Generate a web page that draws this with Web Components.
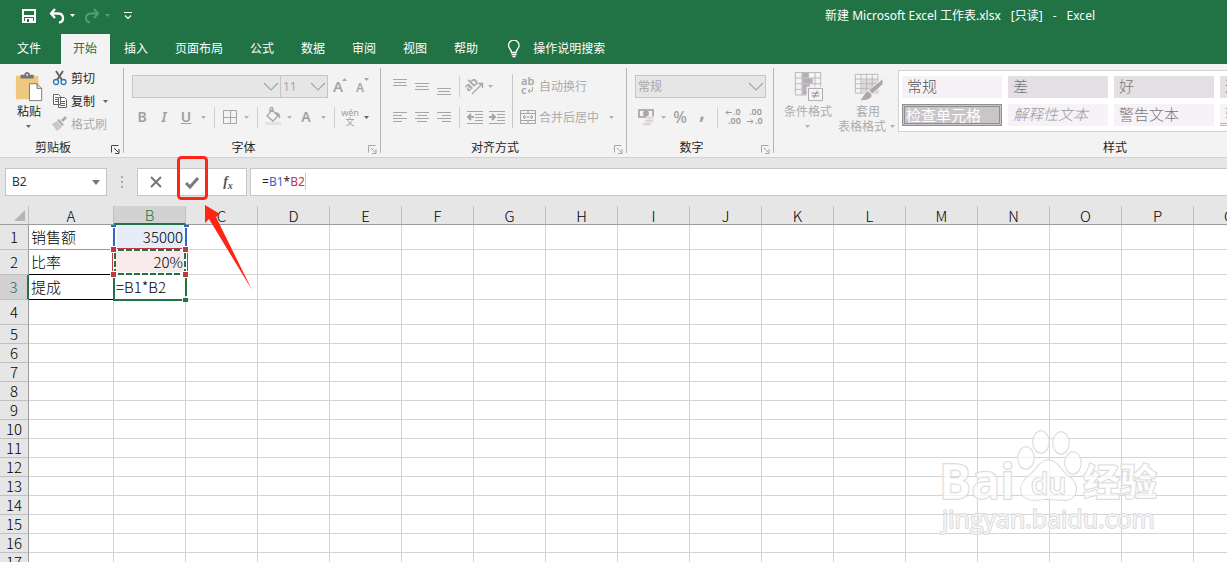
<!DOCTYPE html>
<html lang="zh-CN">
<head>
<meta charset="utf-8">
<title>新建 Microsoft Excel 工作表.xlsx - Excel</title>
<style>
html,body{margin:0;height:100%}
body{overflow:hidden;font:12px/16px "Noto Sans","Noto Sans CJK SC",sans-serif;color:#262626;background:#fff}
</style>
</head>
<body>
<xl-app></xl-app>
<script>
const ICONS={
save:[16,16,`<path fill="none" stroke="#fff" stroke-width="2" d="M2 2h12v12H2z"/><path fill="#fff" d="M2 7h12v2H2zM4 10h8v4H4z"/><path fill="#217346" d="M6 11h2v3H6z"/>`],
undo:[18,16,`<path fill="none" stroke="#fff" stroke-width="2.300" d="M7 1L3 5.500l4 4.500M3 5.500h7c6 0 7 8 1 9"/>`],
redo:[18,16,`<path fill="none" stroke="#5a9a77" stroke-width="2" d="M11 1l4 4.500-4 4.500M15 5.500H8c-6 0-7 8-1 9"/>`],
more:[10,10,`<path fill="none" stroke="#fff" stroke-width="1.200" d="M1 1.500h8M2 4.500L5 7.500 8 4.500"/>`],
bulb:[14,18,`<path fill="none" stroke="#fff" stroke-width="1.300" d="M4.500 12.500c0-3-3-4-3-7a5.300 5.300 0 0 1 10.600 0c0 3-3 4-3 7zM4.500 14.500h5M5.500 16.500h3"/>`],
paste:[30,32,`<path fill="#edc87e" d="M1 4h24v25H1z"/><path fill="#777" d="M6 3h4c0-4 6-4 6 0h4v4H6z"/><circle cx="13" cy="3" r="1" fill="#fff"/><path fill="#fff" stroke="#777" d="M15.500 12.500h8l5 5v13h-13zM23.500 12.500v5h5"/>`],
cut:[16,16,`<path fill="none" stroke="#666" stroke-width="2" d="M4 1l6 9M11 1L5 10"/><circle cx="4" cy="12" r="2.500" fill="none" stroke="#2f75b5" stroke-width="1.300"/><circle cx="11.500" cy="12" r="2.500" fill="none" stroke="#2f75b5" stroke-width="1.300"/>`],
copy:[16,16,`<path fill="#fff" stroke="#666" d="M1.500 1.500h5l2 2v8h-7zM6.500 4.500h6l2 2v8h-8z"/><path stroke="#2f75b5" d="M3 4.500h3M3 6.500h3M3 8.500h3M8 8.500h5M8 10.500h5M8 12.500h5"/>`],
brush:[16,16,`<path fill="#c9c5c9" d="M0 8l5-3 5 6-5 4z"/><path fill="#ababab" d="M5 4l2-1 5 6-2 1zM9 4l4-4 2 2-4 4z"/>`],
grow:[22,22,`<text x="4" y="16" font-size="15" font-weight="600" fill="#a6a6a6">A</text><path fill="#a6a6a6" d="M13 5h5l-2.500-3z"/>`],
shrink:[22,22,`<text x="5" y="16" font-size="12" font-weight="600" fill="#a6a6a6">A</text><path fill="#a6a6a6" d="M13 2h5l-2.500 3z"/>`],
border:[20,22,`<path fill="none" stroke="#a6a6a6" d="M3.500 4.500h13v13h-13zM10.500 5v12M4 11.500h12"/>`],
fill:[20,22,`<path fill="#f5f2f5" stroke="#a6a6a6" stroke-width="1.300" d="M4 10l5-6 6 6-5 5zM7 7V3c0-2 3-2 3 0v3"/><path fill="#a6a6a6" d="M12 6c4 0 6 3 5 7-1-2-2-3-3-3z"/><path fill="#e4e0e4" d="M2 16h16v3H2z"/>`],
top:[22,22,L([[3,14],[6,12,5],[9,14]])],mid:[22,22,L([[7,14],[10,12,5],[13,14]])],bot:[22,22,L([[12,14],[15,12,5],[18,14]])],
left:[22,22,L([[6,14],[9,9],[12,14],[15,9]])],center:[22,22,L([[6,14],[9,10,6],[12,14],[15,10,6]])],right:[22,22,L([[6,14],[9,9,9],[12,14],[15,9,9]])],
angle:[20,22,`<g transform="rotate(-45 8 10)"><text x="1" y="12" font-size="12" font-weight="600" fill="#a6a6a6">ab</text></g><path fill="none" stroke="#a6a6a6" stroke-width="1.300" d="M8 18L18 8M14 7.500h4.500V12"/>`],
outdent:[22,22,`<path stroke="#a6a6a6" d="M3 5.500h16M11 8.500h8M11 11.500h8M11 14.500h8M3 17.500h16"/><path fill="none" stroke="#a6a6a6" stroke-width="2" d="M10 11H4M7 8l-3 3 3 3"/>`],
indent:[22,22,`<path stroke="#a6a6a6" d="M3 5.500h16M11 8.500h8M11 11.500h8M11 14.500h8M3 17.500h16"/><path fill="none" stroke="#a6a6a6" stroke-width="2" d="M3 11h6M6 8l3 3-3 3"/>`],
wrap:[16,18,`<text x="1" y="8" font-size="11" font-weight="600" fill="#a6a6a6">ab</text><text x="1" y="17" font-size="11" font-weight="600" fill="#a6a6a6">c</text><path fill="none" stroke="#a6a6a6" d="M12.500 10v4H8M10 12l-2 2 2 2"/>`],
merge:[16,16,`<path fill="none" stroke="#a6a6a6" d="M.5 1.500h15v13H.5zM0 4.500h16M0 11.500h16M8 2v3M8 12v3M3 8h10M5 6L3 8l2 2M11 6l2 2-2 2"/>`],
money:[22,22,`<path fill="#b3aeb3" d="M3 3h16v9H3z"/><path fill="#f6f2f6" d="M5 5h12v5H5z"/><circle cx="11" cy="7.500" r="3" fill="#aaa6aa"/><g fill="#d9d5d9" stroke="#f3f3f3"><ellipse cx="15" cy="12" rx="4" ry="2"/><ellipse cx="14" cy="15" rx="5" ry="2"/><ellipse cx="12" cy="18" rx="5" ry="2"/></g>`],
inc:[22,22,`<g font-size="9" font-weight="600" fill="#999"><text x="11" y="9">.0</text><text x="6" y="18">.00</text></g><path fill="none" stroke="#999" d="M10 6.500H4M6 4.500l-2 2 2 2"/>`],
dec:[22,22,`<g font-size="9" font-weight="600" fill="#999"><text x="5" y="9">.00</text><text x="11" y="18">.0</text></g><path fill="none" stroke="#999" d="M3 15.500h6M7 13.500l2 2-2 2"/>`],
cond:[32,32,`<path fill="#f6f2f6" stroke="#b9b5b9" d="M2.500 .5h27v24h-27z"/><path fill="none" stroke="#b9b5b9" d="M2 6.500h28M2 12.500h28M2 18.500h28M9.500 1v24M16.500 1v24M23.500 1v24"/><path fill="#b3afb3" d="M10 1h6v5h-6zM10 7h11v5H10zM10 13h8v5h-8zM10 19h6v5h-6z"/><path fill="#f6f2f6" stroke="#f3f3f3" stroke-width="4" d="M16.500 17.500h15v13h-15z"/><path fill="#f6f2f6" stroke="#aaa6aa" d="M16.500 17.500h15v13h-15z"/><path stroke="#888" d="M20 22.500h8M20 25.500h8M26 20l-4 8"/>`],
tbl:[32,32,`<path fill="#f6f2f6" stroke="#b9b5b9" d="M2.500 2.500h24v20h-24z"/><path fill="#dcd8dc" d="M9 8h18v15H9z"/><path fill="none" stroke="#b9b5b9" d="M2 7.500h25M2 12.500h25M2 17.500h25M8.500 3v20M14.500 3v20M20.500 3v20"/><path fill="#aaa6aa" stroke="#f3f3f3" d="M32 7v6L20 24l-4-4zM16 20c3 0 5 3 4 6-2 4-7 5-13 4 4-2 4-8 9-10z"/>`],
launch:[9,9,`<path fill="none" stroke="currentColor" d="M.5 7.500V.5h7M3 3l4.500 4.500M8 4v4.500H4"/>`],
cross:[14,14,`<path fill="none" stroke="#777" stroke-width="2" d="M2 2l10 10M12 2L2 12"/>`],
check:[16,16,`<path fill="none" stroke="#7a7a7a" stroke-width="3" d="M2 9l4 4L14 4"/>`],
chev:[16,10,`<path fill="none" stroke="#a6a6a6" stroke-width="1.200" d="M1 1l7 7 7-7"/>`]
};
function L(rows){return '<path stroke="#a6a6a6" d="'+rows.map(([y,w,x=4])=>`M${x} ${y}.5h${w}`).join('')+'"/>'}
const svg=n=>{const[w,h,b]=ICONS[n];return`<svg width="${w}" height="${h}" viewBox="0 0 ${w} ${h}" aria-hidden="true">${b}</svg>`};
const BASE=`*{box-sizing:border-box}svg{display:block;flex:none}button{font:inherit;color:inherit;background:none;border:0;padding:0;margin:0}`;
function define(name,css,html){
  customElements.define(name,class extends HTMLElement{
    connectedCallback(){
      if(this.shadowRoot)return;
      const r=this.attachShadow({mode:'open'}),t=document.createElement('template');
      t.innerHTML=`<style>${BASE}${css}</style>${typeof html==='function'?html(this):html}`;
      r.append(t.content.cloneNode(true));
    }
  });
}
define('xl-caret',`:host{display:flex;width:12px;justify-content:center;color:#b4b4b4;flex:none}:host([on]){color:#666}:host([big]) svg{width:8px;height:5px}`,
  `<svg width="5" height="3" viewBox="0 0 5 3"><path fill="currentColor" d="M0 0h5L2.500 3z"/></svg>`);
define('xl-sep',`:host{flex:none;width:11px;display:flex;justify-content:center}:host([tight]){width:9px}i{width:1px;height:21px;background:#d0d0d0}`,'<i></i>');
define('xl-tool',`:host{display:flex;align-items:center;flex:none;height:22px;color:#a0a0a0}
  button{width:22px;height:22px;display:flex;align-items:center;justify-content:center;font-size:14px}:host([narrow]) button{width:20px}`,
  e=>`<button aria-label="${e.getAttribute('label')}">${e.getAttribute('icon')?svg(e.getAttribute('icon')):'<slot></slot>'}</button>${e.hasAttribute('caret')?`<xl-caret ${e.getAttribute('caret')}></xl-caret>`:''}`);
define('xl-wide',`:host{display:flex;height:20px;color:#ababab}:host([on]){color:#262626}
  button{display:flex;align-items:center;gap:3px;line-height:18px}span{padding-top:2px}`,
  e=>`<button>${svg(e.getAttribute('icon'))}<span><slot></slot></span></button>`);
define('xl-big',`:host{display:block;flex:none;color:#ababab}:host([on]){color:#262626}
  button{display:flex;flex-direction:column;align-items:center;gap:2px;width:100%;line-height:15px;padding-top:4px}
  span{display:flex;flex-direction:column;align-items:center}svg{height:30px}
  ::slotted(xl-caret){height:15px;align-items:center}`,
  e=>`<button>${svg(e.getAttribute('icon'))}<span><slot></slot></span></button>`);
define('xl-combo',`:host{display:flex;height:23px;position:relative;flex:none}
  select{appearance:none;width:100%;height:23px;border:1px solid #c6c6c6;background:#e6e6e6;border-radius:0;font:inherit;color:#a6a6a6;padding:0 2px;opacity:1}
  svg{position:absolute;right:2px;top:7px;pointer-events:none}`,
  e=>`<select disabled aria-label="${e.getAttribute('label')}"><option>${e.getAttribute('value')}</option></select>${svg('chev')}`);
define('xl-group',`:host{display:flex;flex-direction:column;flex:none;height:85px;border-right:1px solid #b5b5b5}
  .b{height:73px}footer{display:flex;height:12px}footer span{flex:1;text-align:center;line-height:14px}
  footer button{width:17px;height:12px;display:flex;align-items:center;justify-content:center;padding:4px 0 0 2px;color:#a6a6a6}
  :host([on]) footer button{color:#444}`,
  e=>`<div class="b"><slot></slot></div><footer><span>${e.getAttribute('label')}</span><button aria-label="${e.getAttribute('label')}设置">${svg('launch')}</button></footer>`);

define('xl-titlebar',`:host{display:flex;align-items:center;height:34px;background:#217346;color:#fff;padding:0 132px 3px 21px}
  nav{display:flex;align-items:center}nav button{display:flex;align-items:center}
  xl-caret{color:#fff}xl-caret[dim]{color:#5a9a77}h1{font:inherit;margin:0 0 0 auto;display:flex;gap:10px}
  .u{margin-left:11px}.r{margin-left:5px}.m{margin-left:10px}`,
  `<nav><button aria-label="保存">${svg('save')}</button><button class="u" aria-label="撤消">${svg('undo')}<xl-caret></xl-caret></button><button class="r" aria-label="恢复">${svg('redo')}<xl-caret dim></xl-caret></button><button class="m" aria-label="更多">${svg('more')}</button></nav>
  <h1><span>新建 Microsoft Excel 工作表.xlsx</span><span>[只读]</span><span>-</span><span>Excel</span></h1>`);
define('xl-tabs',`:host{display:flex;height:30px;background:#217346;color:#fff;gap:2px}
  button{padding:0 13px 0 12px;height:30px;line-height:18px}.f{padding:0 18px 0 17px;width:59px}.on{background:#f3f3f3;color:#217346}
  .s{display:flex;align-items:center;gap:12px;padding:0 14px}`,
  `<button class="f">文件</button>`+['开始','插入','页面布局','公式','数据','审阅','视图','帮助'].map((t,i)=>`<button class="${i?'':'on'}">${t}</button>`).join('')+
  `<button class="s">${svg('bulb')}操作说明搜索</button>`);
define('xl-gallery',`:host{display:grid;grid-template-columns:repeat(6,100px);gap:6px;border:1px solid #d2d2d2;background:#fff;padding:5px 3px;margin-top:2px;height:62px;flex:none;font:300 15px/18px "Noto Sans CJK SC",sans-serif}
  button{height:22px;text-align:left;padding:0 5px 2px;background:#f6f2f8;color:#555;white-space:nowrap}
  .g{background:#e3dfe3;color:#777}.k{background:#c9c5c9;border:3px double #8f8f8f;color:#fff;padding:0 1px;line-height:14px;font-weight:400}
  .i{font-style:italic;color:#999}.w{color:#777}.c{border-bottom:3px double #b5b5b5;color:#999}`,
  [['常规',''],['差','g'],['好','g'],['适中','g'],['计算','w'],['链接单元格','w'],['检查单元格','k'],['解释性文本','i'],['警告文本','w'],['输出','c'],['输入','w'],['注释','w']].map(([t,c])=>`<button class="${c}">${t}</button>`).join(''));
const T=(i,l,x='')=>`<xl-tool icon="${i}" label="${l}" ${x}></xl-tool>`;
define('xl-ribbon',`:host{display:flex;height:94px;padding:4px 0;background:#f3f3f3;border-bottom:1px solid #d2d2d2;overflow:hidden}
  .row{display:flex;align-items:center;height:22px}.row+.row{margin-top:8px}.row.h{height:23px}
  .clip{display:flex;padding-left:12px;gap:6px}.clip xl-big{width:34px}.col{display:grid;gap:3px;align-content:start}
  .col div{display:flex;align-items:center;gap:4px}
  .pad7{padding:7px 0 0 7px}.pad8{padding:7px 0 0 8px}.al{display:flex}.al .sep{width:1px;height:54px;background:#c8c8c8;margin:6px 7px 0 4px}
  .al .w{padding-top:8px;display:grid;gap:11px;align-content:start}.al .w div{display:flex;align-items:center}.al xl-caret{margin-left:6px}
  .al .row xl-caret{margin:0}b{font-weight:600}.fs{width:149px;margin-left:1px}.sz{width:48px;margin-left:-1px;margin-right:1px}.nf{width:131px}
  .g1{width:124px}.g2{width:257px}.g3{width:246px}.g4{width:147px}.g5{width:700px}
  .st{display:flex;padding-left:4px}.st .a,.st .b{width:60px}.t{display:flex;align-items:center}
  .wen{display:flex;flex-direction:column;font-size:9px;line-height:9px;align-items:center}
  .pct{font-size:16px;font-weight:500}.com{font-size:22px;line-height:10px;padding-bottom:14px}`,
  `<xl-group label="剪贴板" class="g1" on><div class="clip"><xl-big icon="paste" on>粘贴<xl-caret on></xl-caret></xl-big>
   <div class="col"><xl-wide icon="cut" on>剪切</xl-wide><div><xl-wide icon="copy" on>复制</xl-wide><xl-caret on></xl-caret></div><xl-wide icon="brush">格式刷</xl-wide></div></div></xl-group>
  <xl-group label="字体" class="g2"><div class="pad7"><div class="row h"><xl-combo class="fs" label="字体" value=""></xl-combo><xl-combo class="sz" label="字号" value="11"></xl-combo>${T('grow','增大字号')}${T('shrink','减小字号')}</div>
   <div class="row"><xl-tool label="加粗"><b>B</b></xl-tool><xl-tool label="倾斜"><b><i>I</i></b></xl-tool><xl-tool label="下划线" caret><b><u>U</u></b></xl-tool><xl-sep></xl-sep>${T('border','边框','narrow caret')}<xl-sep></xl-sep>${T('fill','填充','narrow caret')}<xl-tool label="字体颜色" caret><b>A</b></xl-tool><xl-sep></xl-sep><xl-tool label="拼音" narrow caret="on"><span class="wen"><span>wén</span><span>文</span></span></xl-tool></div></div></xl-group>
  <xl-group label="对齐方式" class="g3"><div class="al"><div class="pad8"><div class="row h">${T('top','顶端对齐')}${T('mid','垂直居中')}${T('bot','底端对齐')}<xl-sep tight></xl-sep>${T('angle','方向','narrow caret')}</div>
   <div class="row">${T('left','左对齐')}${T('center','居中')}${T('right','右对齐')}<xl-sep tight></xl-sep>${T('outdent','减少缩进')}${T('indent','增加缩进')}</div></div><div class="sep"></div>
   <div class="w"><div><xl-wide icon="wrap">自动换行</xl-wide></div><div><xl-wide icon="merge">合并后居中</xl-wide><xl-caret></xl-caret></div></div></div></xl-group>
  <xl-group label="数字" class="g4"><div class="pad8"><div class="row h"><xl-combo class="nf" label="数字格式" value="常规"></xl-combo></div>
   <div class="row">${T('money','会计格式','caret')}<xl-tool label="百分比"><b class="pct">%</b></xl-tool><xl-tool label="千位分隔"><b class="com">,</b></xl-tool><xl-sep tight></xl-sep>${T('inc','增加小数位')}${T('dec','减少小数位')}</div></div></xl-group>
  <xl-group label="样式" class="g5"><div class="st"><xl-big class="a" icon="cond">条件格式<xl-caret></xl-caret></xl-big><xl-big class="b" icon="tbl">套用<span class="t">表格格式<xl-caret></xl-caret></span></xl-big><xl-gallery></xl-gallery></div></xl-group>`);
define('xl-callout',`:host{display:block;position:absolute;left:3px;top:-13px;z-index:3;pointer-events:none}`,
  `<svg width="84" height="136" viewBox="0 0 84 136"><rect x="1.500" y="1.500" width="28" height="41" rx="3" fill="none" stroke="#ff2414" stroke-width="3"/><path fill="#ff2414" d="M28 49l15 9-4 3 36 73L32 63l-4 4z"/></svg>`);
define('xl-formulabar',`:host{display:flex;align-items:flex-start;background:#e6e6e6;height:48px;padding:10px 0 0 5px}
  .n{position:relative;width:102px;height:28px;background:#fff;border:1px solid #c6c6c6;display:flex;align-items:center}
  input{border:0;outline:0;background:none;font:inherit;color:#333;width:80px;padding:0 0 0 6px}xl-caret{color:#777}
  .n xl-caret{margin-left:4px}.d{width:30px;height:28px;display:flex;justify-content:center;align-items:center}
  .btns{display:flex;width:110px;height:28px;background:#fff;border:1px solid #c6c6c6}
  .btns button,.ck{flex:1;display:flex;align-items:center;justify-content:center;position:relative}.ck{height:26px}
  .fx{font:italic 600 14px "Liberation Serif",serif;color:#555}.fx small{font-size:10px;align-self:flex-end;line-height:18px}
  .f{flex:1;height:28px;margin-left:3px;background:#fff;border:1px solid #c6c6c6;border-right:0;padding-left:11px;line-height:26px;outline:0}
  .b{color:#3366cc}.r{color:#c33540}.f span:last-child{border-right:1px solid #ccc}`,
  `<div class="n"><input aria-label="名称框" value="B2"><xl-caret big></xl-caret></div>
  <div class="d"><svg width="2" height="12"><path fill="#aaa" d="M0 0h2v2H0zM0 5h2v2H0zM0 10h2v2H0z"/></svg></div>
  <div class="btns"><button aria-label="取消">${svg('cross')}</button><div class="ck"><button aria-label="输入">${svg('check')}</button><xl-callout></xl-callout></div><button aria-label="插入函数" class="fx">f<small>x</small></button></div>
  <div class="f" role="textbox" aria-label="编辑栏" contenteditable="true" spellcheck="false">=<span class="b">B1</span>*<span class="r">B2</span></div>`);
define('xl-ranges',`:host{display:block;position:absolute;left:-4px;top:-4px;z-index:1;pointer-events:none}`,
  `<svg width="82" height="84" viewBox="0 0 82 84"><g fill="#fff"><path d="M2 4h5v24H2zM73 4h5v24h-5z" fill-opacity=".7"/></g>
  <path fill="#3366cc" d="M3 7h2v18H3zM75 7h2v18h-2zM1 4h5v2H1zM74 4h5v2h-5z"/>
  <path fill="#c33540" d="M7 27h65v1H7zM2 31h1v20H2zM77 31h1v20h-1z"/>
  <path fill="none" stroke="#fff" stroke-width="2" d="M6 29h68M4 31v20M76 31v20M6 52h68"/>
  <path fill="none" stroke="#217346" stroke-width="2" stroke-dasharray="6 2" d="M8 29h65M5 32v20M75 32v20M8 53h65"/>
  <path fill="#c33540" stroke="#fff" d="M.5 25.500h6v6h-6zM72.500 25.500h6v6h-6zM.5 50.500h6v6h-6zM72.500 50.500h6v6h-6z"/>
  <path fill="#217346" d="M3 57h2v23H3zM75 57h2v18h-2zM3 78h69v2H3zM73 77h5v4h-5z"/></svg>`);
const cols='ABCDEFGHIJKLMNOPQ'.split(''),data={A1:'销售额',A2:'比率',A3:'提成',B1:'35000<xl-ranges></xl-ranges>',B2:'20%',B3:'=B1*B2'};
define('xl-sheet',`:host{display:block;flex:1;min-height:0;overflow:hidden;font:15px/16px "Noto Sans CJK SC",sans-serif;color:#000}
  table{table-layout:fixed;border-collapse:separate;border-spacing:0;width:1266px}
  th,td{padding:0;height:19px;border:0 solid #d4d4d4;border-width:0 1px 1px 0;white-space:nowrap;font-weight:300}
  th{background:#e6e6e6;border-color:#c0c0c0;text-align:center}thead th{border-bottom-color:#9c9c9c;padding-top:1px}tbody th{border-right-color:#9c9c9c}
  .tall th,.tall td{height:25px}td{padding-left:2px}.rh{width:29px}.ca{width:85px}
  .corner svg{margin-left:auto;margin-right:3px}
  thead .on{background:#d2d2d2;color:#217346;border-bottom:2px solid #217346}tbody th.on{background:#d2d2d2;color:#217346;border-right:2px solid #217346}
  td.A1,td.A2,td.A3{border-bottom-color:#000}td.A1{border-bottom-color:#999}
  .B1,.B2{text-align:right;padding-right:2px}.B1{background:#e6edf8;position:relative}.B2{background:#f8eaea}`,
  `<table><colgroup><col class="rh"><col class="ca">${cols.slice(1).map(()=>'<col>').join('')}</colgroup><thead><tr><th class="corner"><svg width="11" height="11"><path fill="#b4b4b4" d="M11 0v11H0z"/></svg></th>${cols.map(c=>`<th class="${c==='B'?'on':''}">${c}</th>`).join('')}</tr></thead><tbody>`+
  Array.from({length:18},(_,i)=>i+1).map(r=>`<tr class="${r<5?'tall':''}"><th class="${r===3?'on':''}">${r}</th>${cols.map(c=>`<td class="${c+r}">${data[c+r]||''}</td>`).join('')}</tr>`).join('')+'</tbody></table>');
define('xl-watermark',`:host{display:block;position:absolute;right:59px;bottom:22px;z-index:2;pointer-events:none}text,path,ellipse{fill:#fff;fill-opacity:.7;stroke:#d6d6d6;stroke-width:1.500;paint-order:stroke}`,
  `<svg width="230" height="115" viewBox="0 0 230 115"><g font-family="Open Sans" font-weight="700"><text x="1" y="74" font-size="48">Bai</text></g>
  <ellipse cx="88" cy="33" rx="8" ry="11"/><ellipse cx="103" cy="17" rx="8" ry="11"/><ellipse cx="123" cy="18" rx="8" ry="11"/><ellipse cx="135" cy="38" rx="8" ry="11"/>
  <path d="M110 35c9 0 12 9 18 14 8 6 11 10 10 17-2 13-17 9-28 8-11 1-25 4-27-8-1-7 3-12 10-17 6-5 9-14 17-14z"/>
  <text x="93" y="69" font-size="28" font-weight="600" font-family="Open Sans">du</text><text x="145" y="71" font-size="37" font-weight="900" font-family="Noto Sans CJK SC">经验</text>
  <text x="4" y="103" font-size="25" font-weight="500" font-family="Open Sans">jingyan.baidu.com</text></svg>`);
define('xl-app',`:host{display:flex;flex-direction:column;height:100vh;position:relative;overflow:hidden}xl-titlebar,xl-tabs,xl-ribbon,xl-formulabar{flex:none}`,
  `<xl-titlebar></xl-titlebar><xl-tabs></xl-tabs><xl-ribbon></xl-ribbon><xl-formulabar></xl-formulabar><xl-sheet></xl-sheet><xl-watermark></xl-watermark>`);
</script>
</body>
</html>
